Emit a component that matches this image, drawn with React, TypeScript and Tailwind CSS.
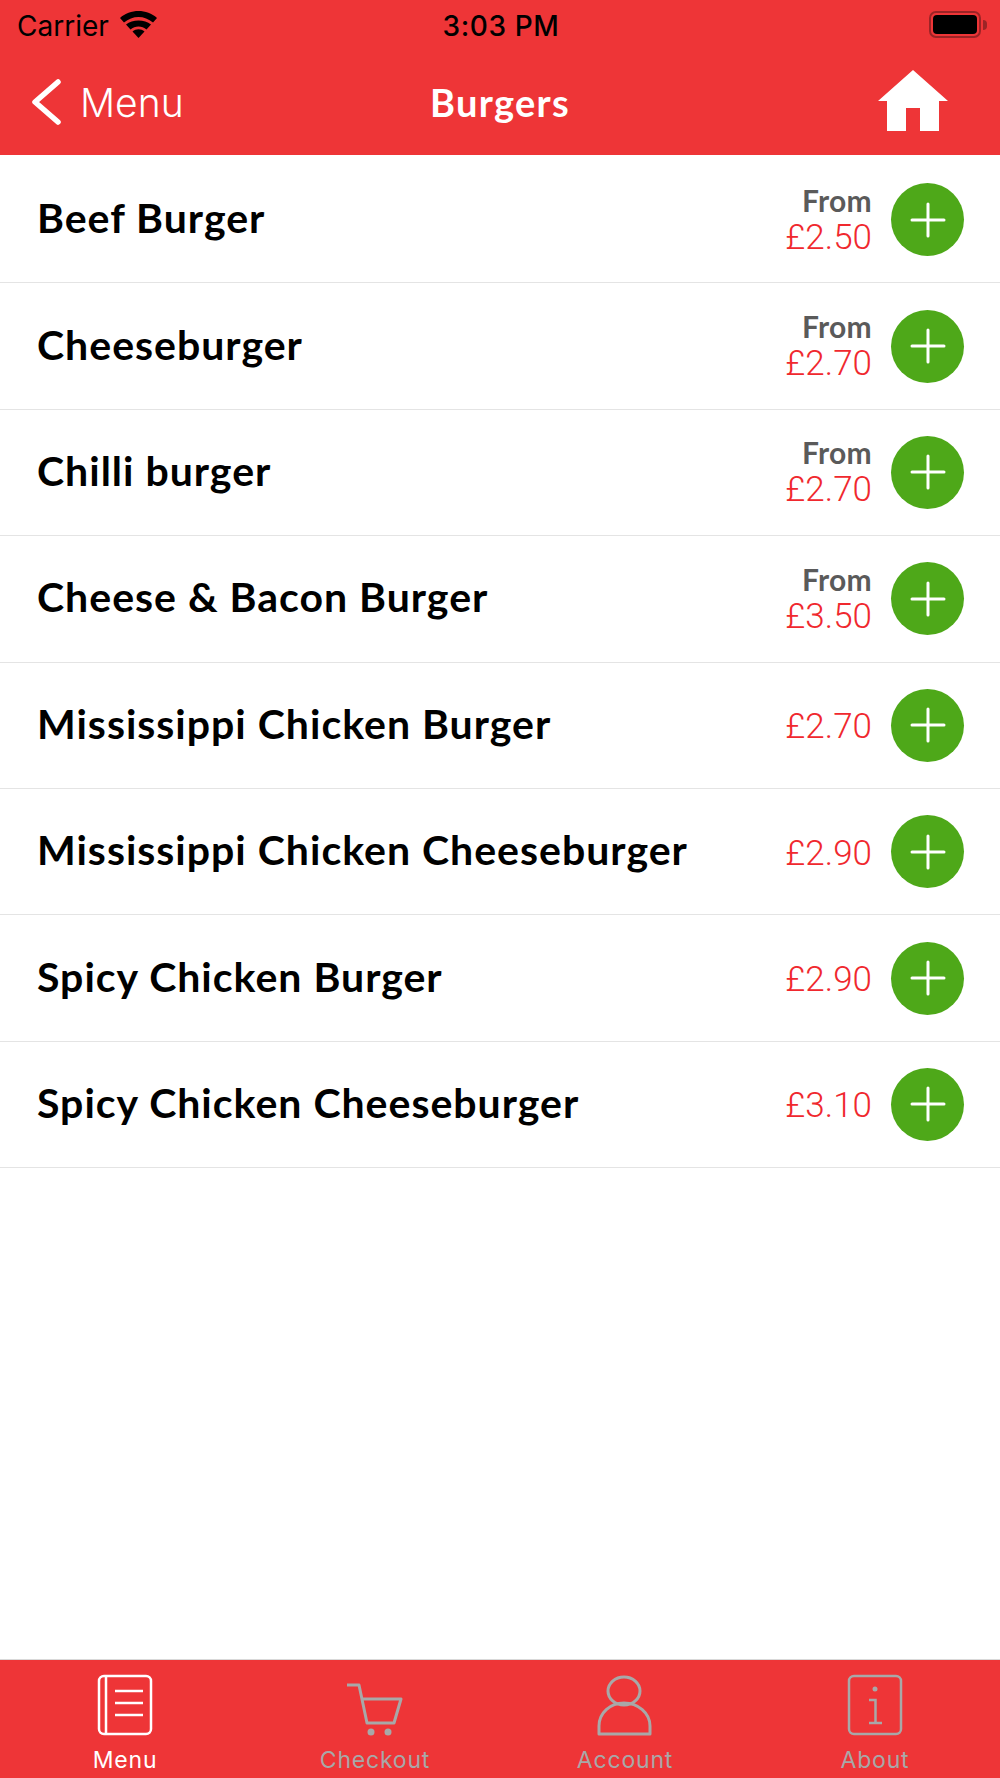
const items = [
  { name: "Beef Burger", price: "£2.50", from: true },
  { name: "Cheeseburger", price: "£2.70", from: true },
  { name: "Chilli burger", price: "£2.70", from: true },
  { name: "Cheese & Bacon Burger", price: "£3.50", from: true },
  { name: "Mississippi Chicken Burger", price: "£2.70", from: false },
  { name: "Mississippi Chicken Cheeseburger", price: "£2.90", from: false },
  { name: "Spicy Chicken Burger", price: "£2.90", from: false },
  { name: "Spicy Chicken Cheeseburger", price: "£3.10", from: false },
];

function MenuIcon() {
  return (
    <svg width="56" height="62" viewBox="0 0 56 62" fill="none" stroke="currentColor" strokeWidth="2.5">
      <rect x="2" y="2" width="52" height="58" rx="5" />
      <path d="M9 2V60M18 17H46M18 29H46M18 41H46" />
    </svg>
  );
}

function CartIcon() {
  return (
    <svg width="56" height="62" viewBox="0 0 56 62" fill="none" stroke="currentColor" strokeWidth="3">
      <path d="M0 11H12L20 49H47L54 25H16" strokeLinejoin="round" />
      <circle cx="24" cy="58" r="3.5" fill="currentColor" stroke="none" />
      <circle cx="41" cy="58" r="3.5" fill="currentColor" stroke="none" />
    </svg>
  );
}

function AccountIcon() {
  return (
    <svg width="56" height="62" viewBox="0 0 56 62" fill="none" stroke="currentColor" strokeWidth="3">
      <ellipse cx="27" cy="17" rx="16" ry="14" />
      <path d="M2 60V52C2 39 13 29 27 29C41 29 53 39 53 52V60Z" strokeLinejoin="round" />
    </svg>
  );
}

function AboutIcon() {
  return (
    <svg width="56" height="62" viewBox="0 0 56 62" fill="none" stroke="currentColor" strokeWidth="2.5">
      <rect x="2" y="2" width="52" height="58" rx="5" />
      <circle cx="28" cy="15" r="2.5" fill="currentColor" stroke="none" />
      <path d="M22 26H28.5V49M22 49H35" />
    </svg>
  );
}

const tabs = [
  { label: "Menu", icon: MenuIcon, active: true },
  { label: "Checkout", icon: CartIcon, active: false },
  { label: "Account", icon: AccountIcon, active: false },
  { label: "About", icon: AboutIcon, active: false },
];

export default function App() {
  return (
    <div className="w-[1000px] h-[1778px] flex flex-col bg-white font-['Lato',sans-serif]">
      {/* Status + nav */}
      <header className="h-[155px] bg-[#ee3537] shrink-0">
        <div className="h-[52px] grid grid-cols-[1fr_auto_1fr] items-center pl-[15px] pr-[13px] text-black font-['Inter',sans-serif]">
          <div className="flex items-center gap-[11px] text-[28px] leading-none pl-[2px]">
            <span>Carrier</span>
            <svg width="37" height="27" viewBox="0 0 37 27" fill="currentColor" className="mb-[4px]">
              <path d="M18.500 27L12.500 20.500C16 17.500 21 17.500 24.500 20.500Z" />
              <path d="M10.500 18.500L6 13.500C12.500 8 24.500 8 31 13.500L26.500 18.500C22 14.500 15 14.500 10.500 18.500Z" />
              <path d="M4 11.500L0 7C10 -2.300 27 -2.300 37 7L33 11.500C24.500 4 12.500 4 4 11.500Z" />
            </svg>
          </div>
          <div className="text-[28px] font-medium leading-none tracking-[0.6px]">3:03 PM</div>
          <div className="flex justify-end items-center mb-[3px]">
            <div className="w-[52px] h-[27px] rounded-[7px] border-2 border-[#9c2426] p-[2px]">
              <div className="w-full h-full rounded-[4px] bg-black" />
            </div>
            <div className="w-[4px] h-[10px] rounded-r-full bg-[#9c2426] ml-[2px]" />
          </div>
        </div>
        <div className="h-[103px] grid grid-cols-[1fr_auto_1fr] items-center text-white pb-[3px]">
          <div className="flex items-center pl-[32px] gap-[18px]">
            <svg width="30" height="46" viewBox="0 0 30 46" fill="none" stroke="currentColor" strokeWidth="5.500" strokeLinecap="round" strokeLinejoin="round">
              <path d="M26 3L3 23L26 43" />
            </svg>
            <span className="text-[39px] font-light leading-none font-['Inter',sans-serif]">Menu</span>
          </div>
          <h1 className="text-[38px] font-bold leading-none tracking-[1.3px]">Burgers</h1>
          <div className="flex justify-end pr-[52px] mb-[4px]">
            <svg width="70" height="61" viewBox="0 0 70 61" fill="currentColor">
              <path d="M35 0L70 31H61V61H42V38H28V61H9V31H0Z" />
            </svg>
          </div>
        </div>
      </header>

      {/* List */}
      <main className="flex-1 min-h-0 pt-[2px]">
        {items.map((item) => (
          <div key={item.name} className="h-[126.4px] flex items-center border-b border-[#e4e4e4] pl-[37px] pr-[36px]">
            <span className="flex-1 text-[41px] font-bold text-black leading-none tracking-[1px] mb-[4px]">{item.name}</span>
            <div className="flex flex-col items-end mr-[19px]">
              {item.from && <span className="text-[30px] font-bold text-[#5a5a5a] leading-[32px] tracking-[0.3px]">From</span>}
              <span className="text-[35px] font-light text-[#f0282e] leading-[36px] mt-[4px] font-['Roboto',sans-serif]">{item.price}</span>
            </div>
            <div className="w-[73px] h-[73px] rounded-full bg-[#4ea819] flex items-center justify-center shrink-0">
              <svg width="36" height="36" viewBox="0 0 36 36" stroke="#fff" strokeWidth="3" strokeLinecap="round">
                <path d="M18 2V34M2 18H34" />
              </svg>
            </div>
          </div>
        ))}
      </main>

      {/* Tab bar */}
      <nav className="h-[119px] shrink-0 grid grid-cols-4 bg-[#ee3537] border-t border-[#d9d9d9] font-['Inter',sans-serif]">
        {tabs.map((tab) => (
          <div key={tab.label} className={`flex flex-col items-center pt-[14px] ${tab.active ? "text-white" : "text-[#a8a8a8]"}`}>
            <tab.icon />
            <span className="text-[23px] tracking-[0.8px] leading-none mt-[13px]">{tab.label}</span>
          </div>
        ))}
      </nav>
    </div>
  );
}
